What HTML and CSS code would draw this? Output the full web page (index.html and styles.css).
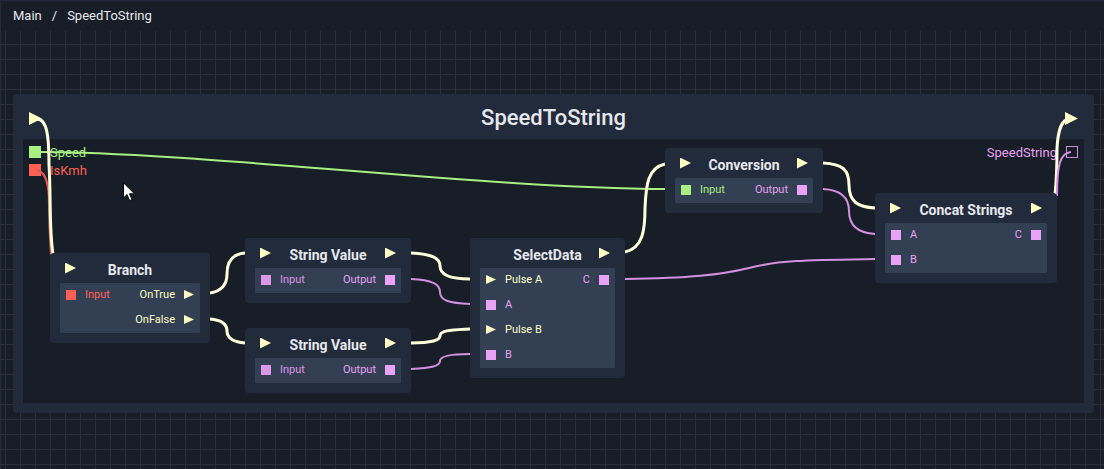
FILE: index.html
```html
<!DOCTYPE html>
<html lang="en">
<head>
<meta charset="utf-8">
<title>SpeedToString</title>
<link rel="stylesheet" href="styles.css">
</head>
<body>
<div class="editor">
  <nav class="breadcrumb" aria-label="Breadcrumb">
    <a href="#main">Main</a><span>/</span><a href="#speed">SpeedToString</a>
  </nav>
  <main class="canvas">
    <section class="group">
      <header class="group-head">
        <i class="pulse large"></i>
        <h1>SpeedToString</h1>
        <i class="pulse large"></i>
      </header>
      <div class="group-body">
        <ul class="ports">
          <li class="green"><i class="pin"></i><span>Speed</span></li>
          <li class="red"><i class="pin"></i><span>IsKmh</span></li>
        </ul>
        <ul class="ports">
          <li class="violet"><span>SpeedString</span><i class="pin hollow"></i></li>
        </ul>
      </div>
    </section>

    <svg class="wires" aria-hidden="true">
      <g transform="translate(0 -31)">
        <path class="wire green" d="M37 152C200 152 480 188 665 189"/>
        <path class="wire red" d="M37 170C46 172 49 184 49 204C49 225 50 240 51 255"/>
        <path class="wire flow" d="M37 119C47 119 49 136 49 165C51 195 49 230 53 254"/>
        <path class="wire flow" d="M210 293C222 291 227 284 227 274C227 262 232 254 245 253"/>
        <path class="wire flow" d="M210 319C222 320 227 324 227 331C227 338 233 342 245 343"/>
        <path class="wire flow" d="M411 253C432 254 440 258 440 266C440 276 452 279 470 279"/>
        <path class="wire violet" d="M411 279C432 280 440 284 440 292C440 301 450 303 470 304"/>
        <path class="wire flow" d="M411 343C432 343 440 340 440 336C440 330 452 330 470 329"/>
        <path class="wire violet" d="M411 369C432 368 440 366 440 361C440 356 452 354 470 354"/>
        <path class="wire flow" d="M625 252C643 248 645 230 645 208C646 184 648 168 665 164"/>
        <path class="wire violet" d="M625 279C690 278 720 275 749 268C780 260 810 260 875 259"/>
        <path class="wire flow" d="M823 163C843 164 849 170 849 185C849 202 858 207 875 208"/>
        <path class="wire violet" d="M823 189C843 190 849 200 849 211C849 226 858 233 875 234"/>
        <path class="wire flow" d="M1055 195C1057 175 1057 160 1057 148C1058 131 1061 119 1070 119"/>
        <path class="wire violet" d="M1057 196C1057 165 1060 153 1071 152"/>
      </g>
    </svg>

    <article class="node branch">
      <header><i class="pulse"></i><h2>Branch</h2></header>
      <div class="slots">
        <ul><li class="red"><i class="pin"></i>Input</li></ul>
        <ul class="out"><li class="cream">OnTrue<i class="pulse small"></i></li><li class="cream">OnFalse<i class="pulse small"></i></li></ul>
      </div>
    </article>

    <article class="node string-a">
      <header><i class="pulse"></i><h2>String Value</h2><i class="pulse"></i></header>
      <div class="slots">
        <ul><li class="orchid"><i class="pin"></i>Input</li></ul>
        <ul class="out"><li class="violet">Output<i class="pin"></i></li></ul>
      </div>
    </article>

    <article class="node string-b">
      <header><i class="pulse"></i><h2>String Value</h2><i class="pulse"></i></header>
      <div class="slots">
        <ul><li class="orchid"><i class="pin"></i>Input</li></ul>
        <ul class="out"><li class="violet">Output<i class="pin"></i></li></ul>
      </div>
    </article>

    <article class="node select">
      <header><h2>SelectData</h2><i class="pulse"></i></header>
      <div class="slots">
        <ul>
          <li class="cream"><i class="pulse small"></i>Pulse A</li>
          <li class="violet"><i class="pin"></i>A</li>
          <li class="cream"><i class="pulse small"></i>Pulse B</li>
          <li class="violet"><i class="pin"></i>B</li>
        </ul>
        <ul class="out"><li class="violet">C<i class="pin"></i></li></ul>
      </div>
    </article>

    <article class="node conversion">
      <header><i class="pulse"></i><h2>Conversion</h2><i class="pulse"></i></header>
      <div class="slots">
        <ul><li class="green"><i class="pin"></i>Input</li></ul>
        <ul class="out"><li class="violet">Output<i class="pin"></i></li></ul>
      </div>
    </article>

    <article class="node concat">
      <header><i class="pulse"></i><h2>Concat Strings</h2><i class="pulse"></i></header>
      <div class="slots">
        <ul><li class="violet"><i class="pin"></i>A</li><li class="violet"><i class="pin"></i>B</li></ul>
        <ul class="out"><li class="violet">C<i class="pin"></i></li></ul>
      </div>
    </article>

    <svg class="pointer" width="13" height="20" viewBox="0 0 13 20" aria-hidden="true">
      <path d="M.5 .8V16L4 12.6L6.600 18.600L9 17.500L6.500 11.800H11.500Z" fill="#fff" stroke="#05070a"/>
    </svg>
  </main>
</div>
</body>
</html>
```
FILE: styles.css
```css
* { box-sizing: border-box; }

body {
  margin: 0;
  background: #181e27;
  color: #e6e8ee;
  font-family: Roboto, "Liberation Sans", sans-serif;
}

h1, h2, ul { margin: 0; padding: 0; list-style: none; }

.editor {
  min-height: 100vh;
  display: flex;
  flex-direction: column;
  box-shadow: inset 1px 1px #222b3b;
}

.breadcrumb {
  display: flex;
  gap: 10px;
  height: 31px;
  padding: 0 13px;
  align-items: center;
  font-size: 13px;
}
.breadcrumb a { color: inherit; text-decoration: none; }

.canvas {
  position: relative;
  flex: 1;
  overflow: hidden;
  padding: 63px 10px 56px 13px;
  background-image:
    linear-gradient(90deg, #2a303b 1px, transparent 1px),
    linear-gradient(#2a303b 1px, transparent 1px);
  background-size: 15px 15px;
  background-position: 5px 13px;
}

.green { color: #a9f082; }
.red { color: #ff6054; }
.violet { color: #e9a2f5; }
.orchid { color: #da98e6; }
.cream { color: #ffffc8; }

.pin {
  flex: none;
  width: 10px;
  height: 10px;
  background: currentColor;
}
.pulse {
  flex: none;
  width: 11px;
  height: 11px;
  background: #ffffc4;
  clip-path: polygon(0 0, 100% 50%, 0 100%);
}
.pulse.small { width: 10px; height: 9px; }
.pulse.large { width: 13px; height: 13px; }

.group {
  padding: 0 10px 10px;
  border-radius: 4px;
  background: #222b3b;
}
.group-head {
  display: flex;
  align-items: center;
  justify-content: space-between;
  height: 45px;
  padding: 4px 6px 0;
}
.group-head h1 {
  padding-bottom: 2px;
  font-size: 22px;
  font-weight: 500;
  line-height: 24px;
}
.group-body {
  display: flex;
  justify-content: space-between;
  min-height: 264px;
  padding: 4px 6px;
  border-radius: 1px;
  background: #181e27;
}
.ports li {
  display: flex;
  align-items: center;
  gap: 9px;
  height: 18px;
  font-size: 13px;
}
.ports .pin { width: 12px; height: 12px; }
.ports .hollow { background: none; border: 1px solid #d08fdc; }

.wires {
  position: absolute;
  inset: 0;
  width: 100%;
  height: 100%;
}
.wire { fill: none; stroke: currentColor; stroke-width: 2; }
.wire.violet { color: #d48fe0; }
.wire.red { color: #e0584f; }
.wire.flow { color: #ffffdc; stroke-width: 3; }

.node {
  position: absolute;
  padding: 0 10px 10px;
  border-radius: 4px;
  background: #222b3b;
}
.node header {
  display: grid;
  grid-template-columns: 11px 1fr 11px;
  align-items: center;
  height: 30px;
  padding: 0 5px;
}
.node h2 {
  grid-column: 2;
  padding-top: 4px;
  font-size: 14px;
  line-height: 16px;
  text-align: center;
  white-space: nowrap;
}
.slots {
  display: flex;
  justify-content: space-between;
  padding: 0 6px;
  border-radius: 1px;
  background: #333f52;
}
.slots li {
  display: flex;
  align-items: center;
  gap: 9px;
  height: 25px;
  padding-bottom: 2px;
  font-size: 11px;
}
.slots .out li { justify-content: flex-end; }

.branch { left: 50px; top: 222px; width: 160px; }
.string-a { left: 245px; top: 207px; width: 166px; }
.string-b { left: 245px; top: 297px; width: 166px; }
.select { left: 470px; top: 207px; width: 155px; }
.conversion { left: 665px; top: 117px; width: 158px; }
.concat { left: 875px; top: 162px; width: 182px; }

.pointer { position: absolute; left: 123px; top: 151px; }
```
